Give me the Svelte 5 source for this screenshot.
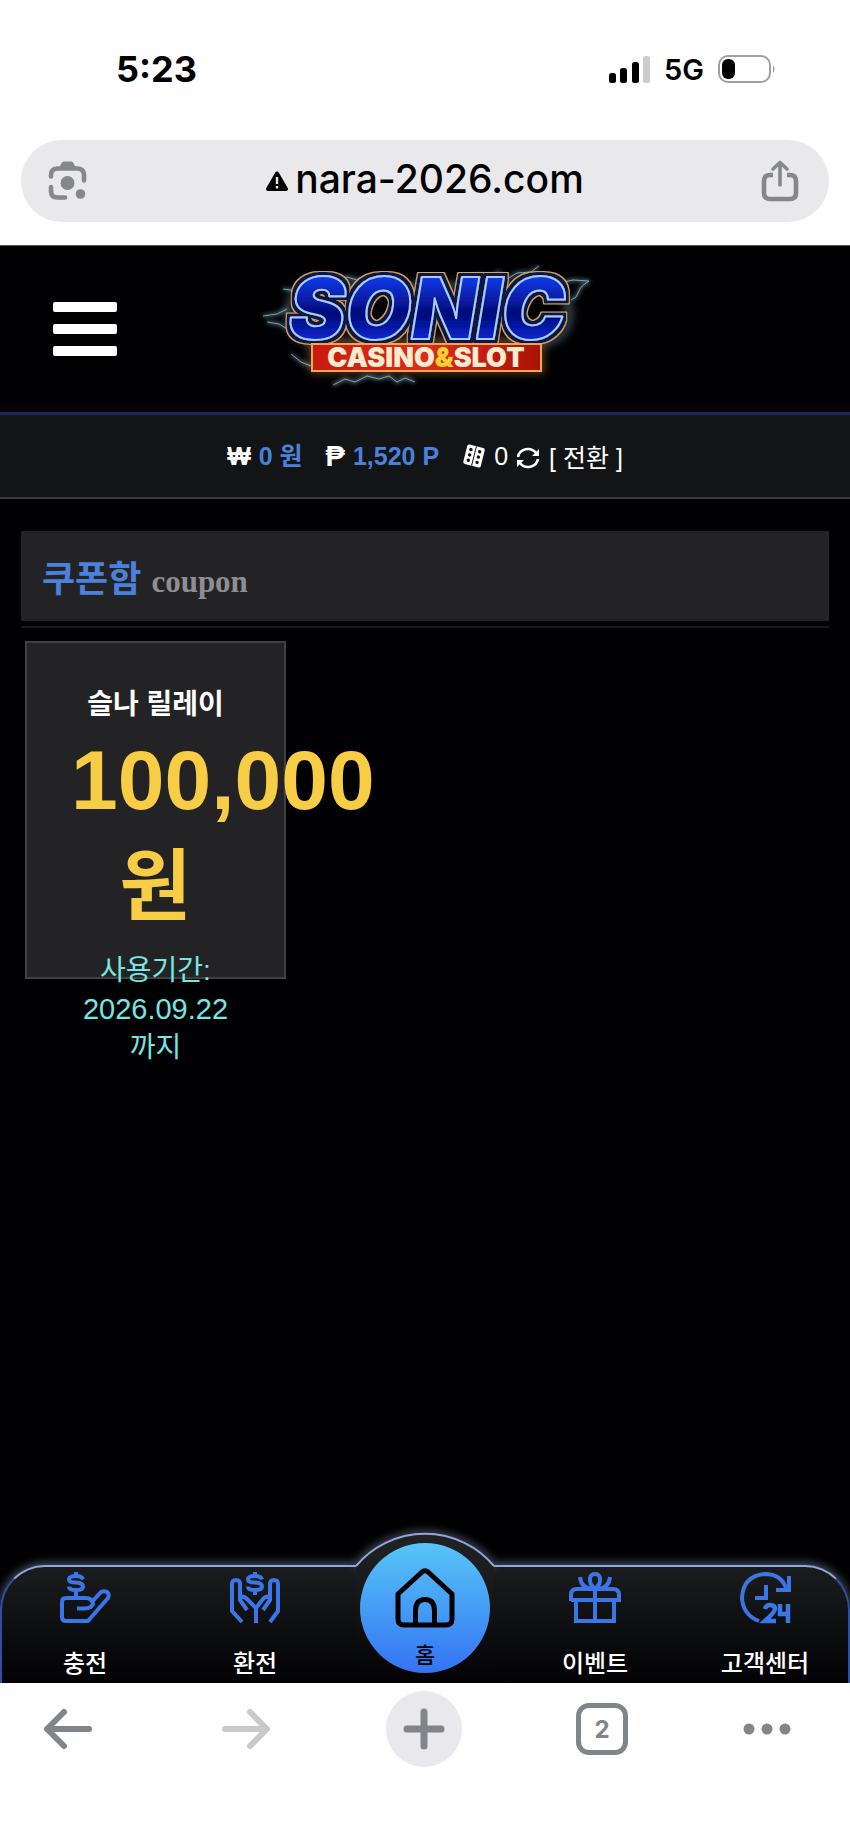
<script>
	const points = "1,520 P";

	const menu = [
		{ id: "charge", label: "충전" },
		{ id: "exchange", label: "환전" },
		{ id: "home", label: "홈" },
		{ id: "event", label: "이벤트" },
		{ id: "support", label: "고객센터" }
	];

	const coupons = [
		{ title: "슬나 릴레이", amount: "100,000", unit: "원", period: "사용기간:", until: "2026.09.22", suffix: "까지" }
	];
</script>

<div class="screen">
	<div class="status">
		<span class="clock">5:23</span>
		<div class="signals">
			<svg width="41" height="27" viewBox="0 0 41 27">
				<rect x="0" y="17" width="7" height="10" rx="2.500" />
				<rect x="11" y="12" width="7" height="15" rx="2.500" />
				<rect x="23" y="6" width="7" height="21" rx="2.500" />
				<rect x="34" y="0" width="7" height="27" rx="2.500" fill="#ccc" />
			</svg>
			<span class="network">5G</span>
			<svg width="58" height="28" viewBox="0 0 58 28">
				<rect x="1" y="1" width="51" height="26" rx="9" fill="none" stroke="#a0a0a0" stroke-width="2" />
				<rect x="4" y="4" width="13" height="20" rx="6" />
				<path d="M55 10q3 4 0 8z" fill="#a0a0a0" />
			</svg>
		</div>
	</div>

	<div class="address">
		<button aria-label="Lens">
			<svg width="40" height="40" viewBox="0 0 40 40" fill="none" stroke="#85878b" stroke-width="4.6" stroke-linecap="round">
				<path d="M3 15.500V14Q3 7.500 10 7.500H29Q36 7.500 36 14V19.500" />
				<path d="M3 26V30Q3 36.500 9.500 36.500H17" />
				<path d="M11 6.500L14 1.500Q14.500 .500 16 .500H23Q24.500 .500 25 1.500L28 6.500z" fill="#85878b" stroke="none" />
				<circle cx="19.500" cy="22" r="7" fill="#85878b" stroke="none" />
				<circle cx="32.500" cy="33" r="4.800" fill="#85878b" stroke="none" />
			</svg>
		</button>
		<a class="url" href="#top">
			<svg width="24" height="22" viewBox="0 0 24 22">
				<path d="M12 3.500L21 19H3z" stroke="#000" stroke-width="4" stroke-linejoin="round" />
				<path d="M12 7V14M12 16V18.500" stroke="#e9e9ec" stroke-width="2.400" />
			</svg>
			<span>nara-2026.com</span>
		</a>
		<button aria-label="Share">
			<svg width="38" height="42" viewBox="0 0 38 42" fill="none" stroke="#85878b" stroke-width="4" stroke-linecap="round" stroke-linejoin="round">
				<path d="M12 15H9Q3 15 3 21V33Q3 39 9 39H29Q35 39 35 33V21Q35 15 29 15H26" stroke-linecap="butt" stroke-width="4.600" />
				<path d="M19 25V3M12 9L19 2.500L26 9" stroke-width="3.600" />
			</svg>
		</button>
	</div>

	<main id="top">
		<header>
			<button class="burger" aria-label="메뉴">
				<span></span>
				<span></span>
				<span></span>
			</button>
			<a class="logo" href="#top">
				<svg width="340" height="130" viewBox="0 0 340 130">
					<defs>
						<linearGradient id="letter" x1="0" y1="0" x2="0" y2="1">
							<stop offset=".2" stop-color="#1238e8" />
							<stop offset=".55" stop-color="#030a78" />
							<stop offset=".85" stop-color="#0a2be0" />
						</linearGradient>
						<linearGradient id="plate" x1="0" y1="0" x2="1" y2="0">
							<stop offset="0" stop-color="#c81a10" />
							<stop offset=".5" stop-color="#dc2c1c" />
							<stop offset="1" stop-color="#a81208" />
						</linearGradient>
						<filter id="glow" x="-10%" y="-20%" width="120%" height="140%">
							<feGaussianBlur stdDeviation="4" />
						</filter>
						<filter id="spark" x="-10%" y="-20%" width="120%" height="140%">
							<feGaussianBlur stdDeviation="2" />
						</filter>
						<!-- navy band and gold rim round the letters -->
						<filter id="rim" x="-5%" y="-10%" width="110%" height="120%">
							<feMorphology in="SourceAlpha" operator="dilate" radius="4" result="wide" />
							<feFlood flood-color="#d8a455" />
							<feComposite in2="wide" operator="in" result="gold" />
							<feMorphology in="SourceAlpha" operator="dilate" radius="3" result="narrow" />
							<feFlood flood-color="#0b1848" />
							<feComposite in2="narrow" operator="in" result="navy" />
							<feMerge>
								<feMergeNode in="gold" />
								<feMergeNode in="navy" />
								<feMergeNode in="SourceGraphic" />
							</feMerge>
						</filter>
						<path id="bolts" d="M80 18L92 13L102 16L112 14L124 18M205 16L222 11L236 12L243 8L252 15L262 9L276 8L284 2M304 19L318 16L334 17L326 23L321 33L316 36M28 25L42 27M8 52L22 50L32 45M12 58L24 60L34 66M36 90L46 98L56 102M78 121L90 115L100 118L112 112L124 115L134 112L142 118L150 114L160 118" />
					</defs>
					<g filter="url(#glow)" opacity=".6">
						<rect x="34" y="22" width="280" height="56" rx="26" fill="none" stroke="#6f98b0" stroke-width="6" />
						<rect x="57" y="79" width="229" height="27" fill="none" stroke="#d98a35" stroke-width="5" />
					</g>
					<g fill="none" stroke="#9cd0e8" stroke-linejoin="round">
						<use href="#bolts" stroke-width="2" opacity=".7" filter="url(#spark)" />
						<use href="#bolts" stroke-width="1" opacity=".7" />
					</g>
					<text class="word" x="172" y="75" text-anchor="middle" fill="url(#letter)" stroke="#a9cdfa" stroke-width="2" stroke-linejoin="round" filter="url(#rim)">SONIC</text>
					<rect x="57" y="80" width="229" height="27" fill="url(#plate)" stroke="#efa850" stroke-width="2" />
					<text x="171" y="103" text-anchor="middle" class="plate">CASINO<tspan fill="#ffd22e">&amp;</tspan>SLOT</text>
				</svg>
			</a>
		</header>

		<div class="wallet">
			<strong>₩</strong>
			<strong class="blue">0 원</strong>
			<strong class="peso">₱</strong>
			<strong class="blue">{points}</strong>
			<svg class="dice" width="24" height="24" viewBox="0 0 24 24">
				<g transform="rotate(14 12 12)">
					<rect x="3" y="2" width="18" height="20" rx="2" fill="#fff" />
					<path d="M12 2V22" stroke="#111315" stroke-width="1" />
					<g fill="#111315">
						<circle cx="7.500" cy="6.500" r="1.700" /><circle cx="7.500" cy="12" r="1.700" /><circle cx="7.500" cy="17.500" r="1.700" />
						<circle cx="16.500" cy="6.500" r="1.700" /><circle cx="16.500" cy="12" r="1.700" /><circle cx="16.500" cy="17.500" r="1.700" />
					</g>
				</g>
			</svg>
			<span>0</span>
			<button class="convert">
				<svg width="24" height="24" viewBox="0 0 24 24" fill="none" stroke="#fff" stroke-width="2.600">
					<path d="M2 11A10 9.500 0 0 1 20 7M22 13A10 9.500 0 0 1 4 17" />
					<path d="M23 3V10H16zM1 21V14H8z" fill="#fff" stroke="none" />
				</svg>
				<span>[ 전환 ]</span>
			</button>
		</div>

		<section>
			<h1>쿠폰함 <small>coupon</small></h1>
			<div class="coupons">
				{#each coupons as coupon}
				<article>
					<h2>{coupon.title}</h2>
					<p class="amount">{coupon.amount} <span>{coupon.unit}</span></p>
					<p class="period">{coupon.period} <time>{coupon.until}</time> {coupon.suffix}</p>
				</article>
				{/each}
			</div>
		</section>

		<nav>
			<!-- outline of the bar: two stretching sides and the bump round the home button -->
			<div class="shape">
				<div class="side left"></div>
				<svg class="bump" width="138" height="160" viewBox="0 0 138 160">
					<defs>
						<linearGradient id="bar" x1="0" y1="0" x2="0" y2="1">
							<stop offset="0" stop-color="#202224" />
							<stop offset=".27" stop-color="#1a1c1e" />
							<stop offset="1" stop-color="#020204" />
						</linearGradient>
						<filter id="halo" x="-20%" y="-50%" width="140%" height="200%">
							<feGaussianBlur stdDeviation="4" />
						</filter>
					</defs>
					<path d="M0 43A90 90 0 0 1 138 43" fill="none" stroke="#8f9fbd" stroke-width="4" opacity=".8" filter="url(#halo)" />
					<path d="M0 43A90 90 0 0 1 138 43V160H0z" fill="url(#bar)" />
					<path d="M0 43A90 90 0 0 1 138 43" fill="none" stroke="#92a5dc" stroke-width="2" />
				</svg>
				<div class="side right"></div>
			</div>
			<div class="items">
				{#each menu as item}
				<a href="#{item.id}" class:home={item.id === "home"}>
					{#if item.id === "home"}
					<svg width="60" height="60" viewBox="0 0 60 60" fill="none" stroke="#000" stroke-width="5" stroke-linejoin="round">
						<path d="M3 26L27 4Q30 1.500 33 4L57 26V51Q57 57 51 57H9Q3 57 3 51Z" />
						<path d="M20.500 57V43Q20.500 31.500 30 31.500T39.500 43V57" />
					</svg>
					{:else}
					<svg width="52" height="52" viewBox="0 0 52 52" fill="none" stroke="#3b76e8" stroke-width="4">
						{#if item.id === "charge"}
						<path d="M24 7.500Q23 4 17 4Q10 4 10 7.500Q10 10.500 17 10.500Q24 11 24 14.500Q24 18 17 18Q10 18 10 14.500M17 0V4M17 18V25" />
						<path d="M18 36.500H26Q32 36.500 34 32Q33 26 27 26H7Q3 26 3 30V45Q3 49 7 49H29L49 26Q51 22 48 20Q44 18 41 21L32 31" stroke-linejoin="round" />
						{:else if item.id === "exchange"}
						<path d="M33 7.500Q32 4 26 4Q19 4 19 7.500Q19 10.500 26 10.500Q33 11 33 14.500Q33 18 26 18Q19 18 19 14.500M26 0V4M26 18V23" />
						<path d="M13 50L3 39V12Q3 8 7 8Q11 8 11 12V28L18 38M11 26Q14 23 18 27L27 36V51M41 50L49 39V12Q49 8 45 8Q41 8 41 12V28L34 38M41 26Q38 23 34 27L27 36" />
						{:else if item.id === "event"}
						<path d="M26 49V17Q20 12 21 6Q22 2 26 2T31 6Q32 12 26 17M11 5Q12 16 23 17M41 5Q40 16 29 17" />
						<path d="M2 29V23Q2 17 8 17H44Q50 17 50 23V28H2M7 29V49H45V29" />
						{:else}
						<path d="M20 49Q4 43 3 26Q4 4 26 2Q42 2 47 16M50 4V18H37M27 13V26H16" />
						<path d="M26 37Q27 33 31 33Q36 33 36 37Q36 40 26 49H37M41 32V42H50M49 32V51" stroke-width="4.500" />
						{/if}
					</svg>
					{/if}
					<span>{item.label}</span>
				</a>
				{/each}
			</div>
		</nav>
	</main>

	<div class="toolbar">
		<button aria-label="Back">
			<svg width="52" height="44" viewBox="0 0 52 44" fill="none" stroke="#818488" stroke-width="6" stroke-linecap="round" stroke-linejoin="round">
				<path d="M47 22H5M22 5L5 22L22 39" />
			</svg>
		</button>
		<button aria-label="Forward" disabled>
			<svg width="52" height="44" viewBox="0 0 52 44" fill="none" stroke="#c9c8cb" stroke-width="6" stroke-linecap="round" stroke-linejoin="round">
				<path d="M5 22H47M30 5L47 22L30 39" />
			</svg>
		</button>
		<button class="add" aria-label="New tab">
			<svg width="42" height="42" viewBox="0 0 42 42" stroke="#818488" stroke-width="7" stroke-linecap="round">
				<path d="M21 4V38M4 21H38" />
			</svg>
		</button>
		<button class="tabs"><span>2</span></button>
		<button class="more" aria-label="More">
			<svg width="50" height="12" viewBox="0 0 50 12" fill="#818488">
				<circle cx="7" cy="6" r="5.500" />
				<circle cx="25" cy="6" r="5.500" />
				<circle cx="43" cy="6" r="5.500" />
			</svg>
		</button>
	</div>
</div>

<style>
	:global(body) {
		margin: 0;
		background: #fefefe;
	}

	.screen {
		display: flex;
		flex-direction: column;
		min-height: 100vh;
		font-family: "Liberation Sans", "Noto Sans CJK KR", sans-serif;
		color: #fff;
	}

	button {
		display: flex;
		align-items: center;
		justify-content: center;
		padding: 0;
		border: 0;
		background: none;
		color: inherit;
		font: inherit;
	}

	a {
		color: inherit;
		text-decoration: none;
	}

	svg {
		display: block;
		flex: none;
	}

	.status {
		display: flex;
		align-items: center;
		justify-content: space-between;
		height: 138px;
		margin-bottom: 2px;
		padding: 0 74px 0 116px;
		box-sizing: border-box;
		font-family: Inter, sans-serif;
		color: #000;
	}

	.clock {
		font-size: 36px;
		font-weight: 700;
	}

	.signals {
		display: flex;
		align-items: center;
		gap: 14px;
	}

	.network {
		font-size: 29px;
		font-weight: 600;
	}

	.address {
		display: flex;
		align-items: center;
		justify-content: space-between;
		height: 82px;
		margin: 0 21px 23px;
		padding: 0 30px 0 27px;
		border-radius: 41px;
		background: #e9e9ec;
		color: #000;
	}

	.url {
		display: flex;
		align-items: center;
		gap: 6px;
		font-family: Inter, sans-serif;
		font-size: 39px;
		font-weight: 500;
	}

	.url span {
		padding-bottom: 6px;
	}

	main {
		display: flex;
		flex: 1;
		flex-direction: column;
		background: #010103;
	}

	header {
		display: grid;
		grid-template-columns: 1fr auto 1fr;
		align-items: center;
		height: 166px;
		padding: 0 53px;
		border-top: 1px solid #555;
		border-bottom: 3px solid #20265c;
	}

	.burger {
		flex-direction: column;
		gap: 12px;
		width: 64px;
	}

	.burger span {
		width: 100%;
		height: 10px;
		border-radius: 2px;
		background: #fff;
	}

	.word {
		font-family: Inter, sans-serif;
		font-size: 85px;
		font-style: italic;
		font-weight: 900;
	}

	.plate {
		font-family: Inter, sans-serif;
		font-size: 27px;
		font-weight: 900;
		fill: #fdebd0;
	}

	.wallet {
		display: flex;
		align-items: center;
		justify-content: center;
		gap: 8px;
		height: 82px;
		border-bottom: 2px solid #3b3d3f;
		background: #121416;
		font-size: 25px;
		line-height: 30px;
	}

	.blue {
		color: #4b80db;
	}

	.peso,
	.dice {
		margin-left: 15px;
	}

	.peso {
		font-size: 29px;
	}

	.convert {
		gap: 9px;
		padding-top: 3px;
	}

	section {
		flex: 1;
		padding: 32px 21px 0;
	}

	h1 {
		margin: 0;
		height: 90px;
		padding: 0 21px;
		background: #232325;
		color: #4b80db;
		font-size: 36px;
		line-height: 97px;
	}

	small {
		color: #8f8f91;
		font-family: "Liberation Serif", serif;
		font-size: 31px;
	}

	.coupons {
		display: flex;
		margin-top: 5px;
		padding: 13px 4px;
		border-top: 2px solid #18181a;
	}

	article {
		width: 169px;
		height: 334px;
		padding: 0 44px;
		border: 2px solid #404042;
		background: #232325;
		text-align: center;
	}

	h2 {
		margin: 42px 0 0;
		font-size: 28px;
		line-height: 40px;
		white-space: nowrap;
	}

	p {
		margin: 0;
	}

	.amount {
		margin-top: 3px;
		color: #f8cd46;
		font-size: 84px;
		font-weight: 700;
		line-height: 105px;
	}

	.amount span {
		font-size: 78px;
	}

	.period {
		margin-top: 12px;
		color: #78e6e1;
		font-size: 28px;
		line-height: 38px;
	}

	time {
		font-size: 29px;
	}

	nav {
		display: grid;
		overflow: hidden;
	}

	.shape,
	.items {
		display: flex;
		grid-area: 1 / 1;
	}

	.shape {
		align-items: flex-end;
	}

	.side {
		flex: 1;
		height: 116px;
		border: 0 solid #92a5dc;
		border-top-width: 2px;
		background: linear-gradient(#1a1c1e, #020204);
		box-shadow: 0 -2px 10px #8f9fbd88;
	}

	.bump {
		z-index: 1;
		overflow: visible;
	}

	.left {
		border-left: 2px solid #2f4f9f;
		border-top-left-radius: 45px;
	}

	.right {
		border-right: 2px solid #2f4f9f;
		border-top-right-radius: 45px;
	}

	.items {
		z-index: 2;
		align-items: flex-end;
	}

	.items a {
		display: flex;
		flex: 1;
		flex-direction: column;
		align-items: center;
		gap: 21px;
		font-size: 24px;
		font-weight: 500;
		line-height: 38px;
		white-space: nowrap;
	}

	.items .home {
		flex: none;
		justify-content: flex-end;
		gap: 11px;
		width: 130px;
		height: 130px;
		margin: 0 20px 10px;
		box-sizing: border-box;
		border-radius: 50%;
		background: linear-gradient(#57c5f7, #3473f4);
		color: #000;
		font-size: 22px;
		line-height: 34px;
	}

	.toolbar {
		display: flex;
		align-items: flex-start;
		justify-content: space-between;
		height: 165px;
		padding: 8px 58px 0 30px;
		box-sizing: border-box;
	}

	.toolbar button {
		width: 76px;
		height: 76px;
	}

	.toolbar .add {
		border-radius: 50%;
		background: #e9e9ed;
	}

	.toolbar .more {
		width: 50px;
	}

	.tabs span {
		display: flex;
		align-items: center;
		justify-content: center;
		width: 42px;
		height: 42px;
		border: 5px solid #818488;
		border-radius: 13px;
		color: #818488;
		font-family: Inter, sans-serif;
		font-size: 24px;
		font-weight: 700;
	}
</style>
